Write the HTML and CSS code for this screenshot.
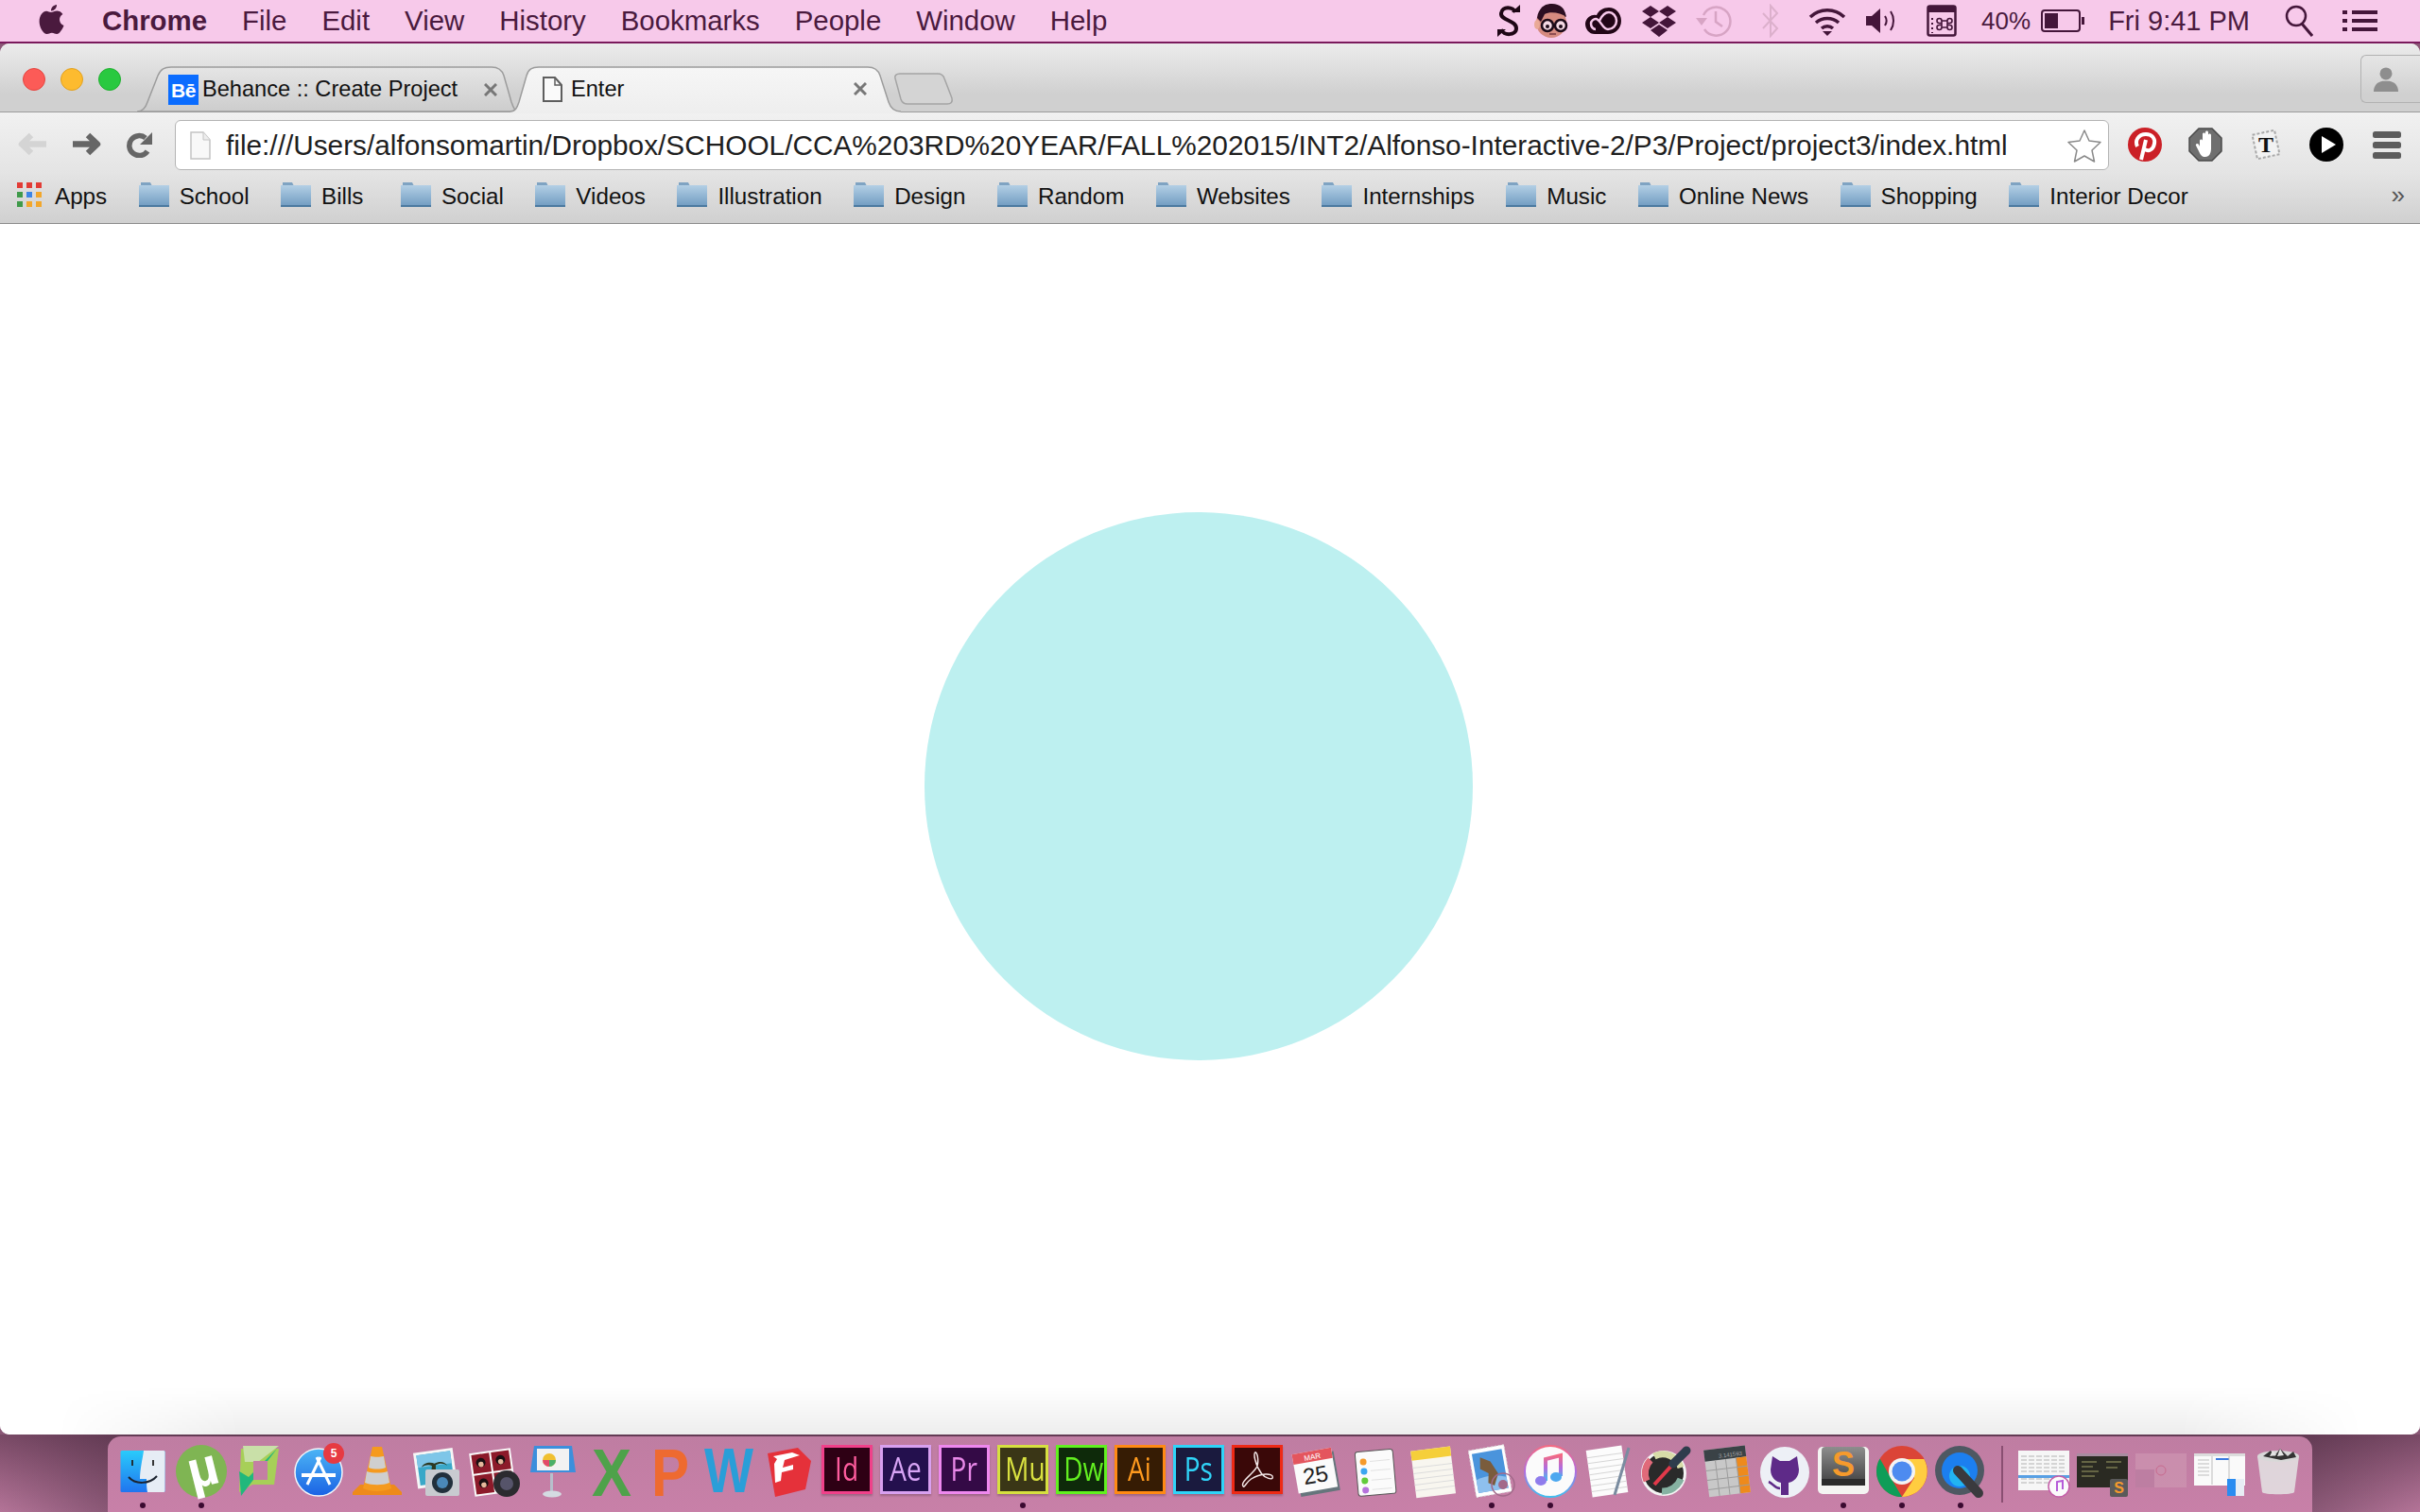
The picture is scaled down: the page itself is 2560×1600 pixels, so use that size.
FILE: index.html
```html
<!DOCTYPE html>
<html lang="en">
<head>
<meta charset="utf-8">
<title>Enter</title>
<link rel="stylesheet" href="styles.css">
</head>
<body>
<header class="menubar">
  <svg class="apple" width="28" height="34" viewBox="0 0 28 34"><path fill="#4a1a3e" d="M19 1c.3 3-2.500 6.500-6 6.500C12.700 4.300 15.800 1.200 19 1zM13 9c2 0 3.600-1.500 6.300-1.500 2.200 0 4.600 1.200 6.100 3.400-5 3-4.200 9.900 1.100 12-1.300 3.500-4.600 9.100-7.400 9.100-2 0-2.800-1.300-5.200-1.300s-3.200 1.300-5.200 1.300C4.500 32 .6 24.500.6 18.700.6 12 4.700 7.700 8 7.700 10 7.700 11.300 9 13 9z"/></svg>
  <nav class="menus">
    <span class="menu-app">Chrome</span><span>File</span><span>Edit</span><span>View</span><span>History</span><span>Bookmarks</span><span>People</span><span>Window</span><span>Help</span>
  </nav>
  <div class="tray">
    <svg class="t-sync" width="26" height="36" viewBox="0 0 26 36"><g fill="none" stroke="#1e0716" stroke-width="4"><path d="M20 9C18 3 6 2 5 10c-1 8 16 7 16 16 0 8-14 8-16 1"/></g><path fill="#1e0716" d="M16 9h9V1zM10 27H1v8z"/></svg>
    <svg class="t-face" width="40" height="38" viewBox="0 0 40 38"><path fill="#2c0e22" d="M8 12C9 3 16 1 22 1c8 0 14 5 14 13v6H8z"/><ellipse cx="21" cy="21" rx="16" ry="16" fill="#d68b80"/><path fill="#2c0e22" d="M6 16C7 5 15 3 22 3c8 0 14 4 15 12-6-5-18-6-23-3l-4 8z"/><ellipse cx="6" cy="23" rx="3" ry="5" fill="#e9a996"/><circle cx="17" cy="24" r="6" fill="#f4d9e4" stroke="#1c0a18" stroke-width="2.500"/><circle cx="31" cy="24" r="6" fill="#f4d9e4" stroke="#1c0a18" stroke-width="2.500"/><circle cx="17" cy="25" r="2" fill="#1c0a18"/><circle cx="31" cy="25" r="2" fill="#1c0a18"/><path d="M19 33h7" stroke="#8f4e52" stroke-width="2"/></svg>
    <svg class="t-cc" width="40" height="30" viewBox="0 0 40 30"><path fill="#220617" d="M1 18a10 10 0 0 1 12-9C15 4 20 1 26 1c7 0 13 6 13 14 0 8-6 14-14 14H11C5 29 1 24 1 18z"/><path fill="none" stroke="#f7c9ea" stroke-width="2.500" d="M12 24c-3 0-5-3-5-6s3-5 5-5c5 0 7 11 13 11 5 0 9-4 9-9s-4-9-8-9c-6 0-9 7-10 9"/></svg>
    <svg class="t-box" width="36" height="34" viewBox="0 0 36 34"><path fill="#44163a" d="M9 1l9 6-9 6-9-6zM27 1l9 6-9 6-9-6zM9 13l9 6-9 6-9-6zM27 13l9 6-9 6-9-6zM18 21l9 6-9 7-9-7z"/></svg>
    <svg class="t-time" width="38" height="36" viewBox="0 0 38 36"><g fill="none" stroke="#d7a4c4" stroke-width="2.500"><path d="M8 12A15 15 0 1 1 9 27"/><path d="M21 8v11l7 5"/></g><path fill="#d7a4c4" d="M0 15h12l-6 8z"/></svg>
    <svg class="t-bt" width="20" height="36" viewBox="0 0 20 36"><path fill="none" stroke="#dcb0cc" stroke-width="2" d="M2 10l15 16-7 8V2l7 8L2 26"/></svg>
    <svg class="t-wifi" width="40" height="32" viewBox="0 0 40 32"><g fill="none" stroke="#44163a" stroke-width="3.500"><path d="M2 12a26 26 0 0 1 36 0"/><path d="M8 18a18 18 0 0 1 24 0"/><path d="M14 24a9 9 0 0 1 12 0"/></g><path fill="#44163a" d="M20 32l-5-5h10z"/></svg>
    <svg class="t-vol" width="34" height="30" viewBox="0 0 34 30"><path fill="#44163a" d="M0 10h6l9-8v26l-9-8H0z"/><g fill="none" stroke="#44163a" stroke-width="2"><path d="M20 10c2 3 2 7 0 10"/><path d="M26 5c4 6 4 14 0 20"/></g></svg>
    <svg class="t-cmd" width="32" height="34" viewBox="0 0 32 34"><rect x="1.500" y="1.500" width="29" height="31" rx="2" fill="none" stroke="#44163a" stroke-width="2.500"/><path fill="#44163a" d="M2 2h28v6H2z"/><path fill="none" stroke="#44163a" stroke-width="1.600" d="M16 17h6v7h-6zM16 17a2.500 2.500 0 1 0-2.500 2.500H16M22 17a2.500 2.500 0 1 1 2.500 2.500H22M16 24a2.500 2.500 0 1 1-2.500-2.500H16M22 24a2.500 2.500 0 1 0 2.500-2.500H22"/><path stroke="#44163a" stroke-width="2" stroke-dasharray="2 3" d="M6 14v16"/></svg>
    <span class="pct">40%</span>
    <svg class="t-bat" width="46" height="24" viewBox="0 0 46 24"><rect x="1" y="1" width="40" height="22" rx="3" fill="none" stroke="#44163a" stroke-width="2"/><rect x="4" y="4" width="14" height="16" fill="#44163a"/><rect x="43" y="8" width="3" height="8" fill="#44163a"/></svg>
    <span class="clock">Fri 9:41 PM</span>
    <svg class="t-search" width="30" height="34" viewBox="0 0 30 34"><circle cx="12" cy="12" r="10" fill="none" stroke="#44163a" stroke-width="2.500"/><path stroke="#44163a" stroke-width="3" d="M18 20l11 13"/></svg>
    <svg class="t-list" width="37" height="22" viewBox="0 0 37 22"><path fill="#44163a" d="M0 0h5v4H0zM10 0h27v4H10zM0 9h5v4H0zM10 9h27v4H10zM0 18h5v4H0zM10 18h27v4H10z"/></svg>
  </div>
</header>

<main class="window">
  <div class="tabstrip">
    <div class="lights"><i class="light red"></i><i class="light amber"></i><i class="light green"></i></div>
    <div class="tab tab-back">
      <svg class="tab-shape" width="403" height="49" viewBox="0 0 403 49"><defs><linearGradient id="tb" x1="0" y1="0" x2="0" y2="1"><stop offset="0" stop-color="#e5e5e5"/><stop offset="1" stop-color="#cdcdcd"/></linearGradient></defs><path fill="url(#tb)" stroke="#9c9c9c" stroke-width="1.500" d="M0 48C6 48 9 44 11 38L22 10C25 3 29 1 36 1H375C382 1 386 4 388 10L396 38C398 44 400 48 403 48Z"/></svg>
      <span class="be">Bē</span>
      <span class="tab-title">Behance :: Create Project</span>
      <svg class="tab-x" width="14" height="14" viewBox="0 0 14 14"><path stroke="#777" stroke-width="3" d="M1 1l12 12M13 1L1 13"/></svg>
    </div>
    <div class="tab tab-front">
      <svg class="tab-shape" width="413" height="50" viewBox="0 0 413 50"><defs><linearGradient id="ta" x1="0" y1="0" x2="0" y2="1"><stop offset="0" stop-color="#f6f6f6"/><stop offset="1" stop-color="#eeeeee"/></linearGradient></defs><path fill="url(#ta)" d="M0 50V48C5 48 7 44 9 38L17 10C19 3 23 1 30 1H378C385 1 389 4 391 10L400 38C402 44 406 48 413 48V50Z"/><path fill="none" stroke="#9c9c9c" stroke-width="1.500" d="M0 48C5 48 7 44 9 38L17 10C19 3 23 1 30 1H378C385 1 389 4 391 10L400 38C402 44 406 48 413 48"/></svg>
      <svg class="tab-page" width="21" height="27" viewBox="0 0 21 27"><path fill="#fafafa" stroke="#5e5e5e" stroke-width="2" d="M1 1h12l7 8v17H1z"/><path fill="none" stroke="#5e5e5e" stroke-width="1.500" d="M13 1v8h7"/></svg>
      <span class="tab-title">Enter</span>
      <svg class="tab-x" width="14" height="14" viewBox="0 0 14 14"><path stroke="#777" stroke-width="3" d="M1 1l12 12M13 1L1 13"/></svg>
    </div>
    <svg class="newtab" width="65" height="34" viewBox="0 0 65 34"><path fill="#d4d4d4" stroke="#a4a4a4" stroke-width="1.500" d="M8 1H48C52 1 54 3 55 6L63 27C64 31 62 33 58 33H16C12 33 10 31 9 28L3 6C2 3 4 1 8 1Z"/></svg>
    <div class="avatar">
      <svg width="26" height="26" viewBox="0 0 30 30"><circle cx="15" cy="8" r="7.500" fill="#8e8e8e"/><path fill="#8e8e8e" d="M0 30c0-8 5-12 11-13h8c6 1 11 5 11 13z"/></svg>
    </div>
  </div>

  <div class="chrome-body">
    <div class="toolbar">
      <svg class="nav-back" width="32" height="27" viewBox="0 0 32 27"><path fill="none" stroke="#d4d4d4" stroke-width="6.500" stroke-linejoin="round" d="M30 13.500H5M14 4L4 13.500 14 23"/></svg>
      <svg class="nav-fwd" width="32" height="27" viewBox="0 0 32 27"><path fill="none" stroke="#666" stroke-width="6.500" stroke-linejoin="round" d="M2 13.500h25M18 4l10 9.500L18 23"/></svg>
      <svg class="nav-reload" width="28" height="28" viewBox="0 0 28 28"><path fill="none" stroke="#666" stroke-width="5.500" d="M22 21A10.500 10.500 0 1 1 20 7"/><path fill="#666" d="M27 1v13H14z"/></svg>
      <div class="omnibox">
        <svg class="url-page" width="22" height="30" viewBox="0 0 22 30"><path fill="#f8f8f8" stroke="#c4c4c4" stroke-width="1.500" d="M1 1h13l7 8v20H1z"/><path fill="#ededed" stroke="#c4c4c4" d="M14 1v8h7"/></svg>
        <span class="url">file:///Users/alfonsomartin/Dropbox/SCHOOL/CCA%203RD%20YEAR/FALL%202015/INT2/Alfonso-Interactive-2/P3/Project/project3/index.html</span>
        <svg class="star" width="36" height="36" viewBox="0 0 36 36"><path fill="#fff" stroke="#8a8a8a" stroke-width="1.500" stroke-linejoin="round" d="M18 2l5 11 12 1.500-9 8.500 2.500 12L18 29 7.500 35 10 23 1 14.500 13 13z"/></svg>
      </div>
      <div class="exts">
        <svg width="36" height="36" viewBox="0 0 36 36"><circle cx="18" cy="18" r="18" fill="#cb2027"/><path fill="none" stroke="#fff" stroke-width="4" d="M10 20c-3-6 1-13 9-13 7 0 10 5 9 10-1 6-6 9-10 6M19 13l-5 21"/></svg>
        <svg width="36" height="36" viewBox="0 0 36 36"><path fill="#6f6f6f" stroke="#4a4a4a" stroke-width="1.500" d="M11 1h14l10 10v14L25 35H11L1 25V11z"/><path fill="#fff" d="M12 14c0-2 3-2 3 0V7c0-2 3-2 3 0V5c0-2 3-2 3 0v3c0-2 3-2 3 0v14c0 5-2 9-6 9s-5-2-7-6l-3-6c-1-2 2-3 3-1l1 2z"/></svg>
        <svg width="36" height="36" viewBox="0 0 36 36"><g transform="rotate(-12 18 18)"><path fill="#f2f2f2" stroke="#a8a8a8" stroke-width="2" stroke-dasharray="3 2" d="M6 5h24v26H6z"/></g><text x="18" y="26" text-anchor="middle" class="ext-t">T</text></svg>
        <svg width="36" height="36" viewBox="0 0 36 36"><circle cx="18" cy="18" r="18" fill="#000"/><path fill="#fff" d="M13 9l15 9-15 9z"/></svg>
        <svg width="36" height="36" viewBox="0 0 36 36"><g fill="#5c5c5c"><rect x="3" y="4" width="30" height="7" rx="2.500"/><rect x="3" y="15" width="30" height="7" rx="2.500"/><rect x="3" y="26" width="30" height="7" rx="2.500"/></g></svg>
      </div>
    </div>
    <div class="bookmarks">
      <div class="bm bm-apps"><svg width="26" height="26" viewBox="0 0 26 26"><path fill="#e23c36" d="M0 0h6v6H0zM10 0h6v6h-6zM20 0h6v6h-6z"/><path fill="#3f9a4a" d="M0 10h6v6H0z"/><path fill="#3c85e6" d="M10 10h6v6h-6z"/><path fill="#f2a72c" d="M20 10h6v6h-6zM10 20h6v6h-6zM20 20h6v6h-6z"/><path fill="#3f9a4a" d="M0 20h6v6H0z"/></svg><span>Apps</span></div>
      <div class="bm"><svg class="folder" viewBox="0 0 32 26"><use href="#fld"/></svg><span>School</span></div>
      <div class="bm bm-bills"><svg class="folder" viewBox="0 0 32 26"><use href="#fld"/></svg><span>Bills</span></div>
      <div class="bm"><svg class="folder" viewBox="0 0 32 26"><use href="#fld"/></svg><span>Social</span></div>
      <div class="bm"><svg class="folder" viewBox="0 0 32 26"><use href="#fld"/></svg><span>Videos</span></div>
      <div class="bm"><svg class="folder" viewBox="0 0 32 26"><use href="#fld"/></svg><span>Illustration</span></div>
      <div class="bm"><svg class="folder" viewBox="0 0 32 26"><use href="#fld"/></svg><span>Design</span></div>
      <div class="bm"><svg class="folder" viewBox="0 0 32 26"><use href="#fld"/></svg><span>Random</span></div>
      <div class="bm"><svg class="folder" viewBox="0 0 32 26"><use href="#fld"/></svg><span>Websites</span></div>
      <div class="bm"><svg class="folder" viewBox="0 0 32 26"><use href="#fld"/></svg><span>Internships</span></div>
      <div class="bm"><svg class="folder" viewBox="0 0 32 26"><use href="#fld"/></svg><span>Music</span></div>
      <div class="bm"><svg class="folder" viewBox="0 0 32 26"><use href="#fld"/></svg><span>Online News</span></div>
      <div class="bm"><svg class="folder" viewBox="0 0 32 26"><use href="#fld"/></svg><span>Shopping</span></div>
      <div class="bm"><svg class="folder" viewBox="0 0 32 26"><use href="#fld"/></svg><span>Interior Decor</span></div>
      <span class="more">»</span>
    </div>
  </div>

  <section class="page">
    <div class="circle"></div>
    <div class="shade"></div>
  </section>
</main>

<footer class="desk">
  <div class="dock">
    <div class="slot"><svg viewBox="0 0 56 56"><defs><linearGradient id="fb" x1="0" y1="0" x2="0" y2="1"><stop offset="0" stop-color="#2acbfb"/><stop offset="1" stop-color="#2075ef"/></linearGradient></defs><rect x="4.500" y="6" width="47" height="44" rx="1.500" fill="url(#fb)"/><path fill="#e6edf5" d="M29 6h21a1.500 1.500 0 0 1 1.500 1.500v41A1.500 1.500 0 0 1 50 50H33c-1-5-1-11-1-14h-7c0-10 3-22 4-30z"/><path d="M17 16v6M39 16v6" stroke="#222" stroke-width="1.800"/><path d="M13 34c7 8 22 8 30-1" fill="none" stroke="#1c2430" stroke-width="2"/></svg><i class="dot"></i></div>
    <div class="slot"><svg viewBox="0 0 56 56"><ellipse cx="28" cy="28" rx="27" ry="28" fill="#7fb553"/><text x="30" y="44" text-anchor="middle" class="ico-mu" transform="rotate(-14 28 28)">µ</text></svg><i class="dot"></i></div>
    <div class="slot"><svg viewBox="0 0 56 56"><path fill="#a7cf58" d="M8 4h40l-5 38H20L6 50z"/><path fill="#c9e0a8" d="M10 1h38L26 18H12z"/><path fill="#21b87c" d="M46 4L8 54l-2-26 10 6z"/><rect x="21" y="17" width="15" height="20" fill="#c47ea4"/></svg></div>
    <div class="slot slot-badge"><svg viewBox="0 0 56 56"><defs><linearGradient id="as" x1="0" y1="0" x2="0" y2="1"><stop offset="0" stop-color="#4cb5f5"/><stop offset="1" stop-color="#1a62e4"/></linearGradient></defs><circle cx="28" cy="29" r="25" fill="url(#as)" stroke="#f2f6fa" stroke-width="1.500"/><g stroke="#fff" stroke-width="3" fill="none"><path d="M30 13L16 42M26 13l14 29"/><path d="M10 32h36" stroke-width="4"/></g></svg><span class="badge">5</span></div>
    <div class="slot"><svg viewBox="0 0 56 56"><path fill="#ee8a1a" d="M2 50l8-8h36l8 8 0 3H2z"/><path fill="#f59a1e" d="M23 2h10l10 44c-8 4-22 4-30 0z"/><path fill="#cfcfcf" d="M21 12c4 1 10 1 14 0l2 12c-5 2-13 2-18 0zM17 28c6 2 16 2 22 0l2 12c-7 3-19 3-26 0z"/></svg></div>
    <div class="slot"><svg viewBox="0 0 56 56"><g transform="rotate(-8 25 22)"><rect x="6" y="6" width="42" height="38" fill="#f6f6f6"/><rect x="9" y="9" width="36" height="32" fill="#3aa8c8"/><rect x="9" y="9" width="36" height="13" fill="#7ec6e8"/><path fill="#2c3a22" d="M27 20c-5-3-12-2-14 2 4-2 8-2 11 0l-4 14h6l2-14c4-2 9-1 12 2-2-5-8-6-13-4z"/></g><rect x="17" y="26" width="36" height="28" rx="2" fill="#c8cbd0"/><circle cx="35" cy="40" r="11" fill="#22303c"/><circle cx="35" cy="40" r="6" fill="#4a88b8"/></svg></div>
    <div class="slot"><svg viewBox="0 0 56 56"><g transform="rotate(-8 26 28)"><rect x="4" y="6" width="44" height="46" fill="#fafafa"/><g fill="#8c1a2a"><rect x="6" y="8" width="19" height="20"/><rect x="27" y="8" width="19" height="20"/><rect x="6" y="30" width="19" height="20"/><rect x="27" y="30" width="19" height="20"/></g><g fill="#1a1012"><circle cx="15" cy="17" r="5"/><circle cx="36" cy="17" r="5"/><circle cx="15" cy="39" r="5"/></g><g fill="#e6b89c"><circle cx="15" cy="19" r="2.800"/><circle cx="36" cy="19" r="2.800"/><circle cx="15" cy="41" r="2.800"/></g></g><circle cx="41" cy="41" r="14" fill="#2b2b2f"/><circle cx="41" cy="41" r="7" fill="#56546a"/></svg></div>
    <div class="slot"><svg viewBox="0 0 56 56"><path fill="#3c8fdc" d="M8 1h40l4 28H4z"/><rect x="11" y="4" width="34" height="23" fill="#f2f2f2"/><circle cx="24" cy="16" r="7" fill="#f0c030"/><path fill="#4ab06a" d="M24 16v7a7 7 0 0 0 7-7z"/><path fill="#e24a6a" d="M24 16h-7a7 7 0 0 0 7 7z"/><path d="M26.500 30v19" stroke="#b6c0cc" stroke-width="3"/><ellipse cx="27" cy="52" rx="10" ry="3.500" fill="#d4dbe2"/></svg></div>
    <div class="slot"><svg viewBox="0 0 56 56"><text x="28" y="54" text-anchor="middle" textLength="42" lengthAdjust="spacingAndGlyphs" class="ico-x">X</text></svg></div>
    <div class="slot"><svg viewBox="0 0 56 56"><text x="28" y="54" text-anchor="middle" textLength="40" lengthAdjust="spacingAndGlyphs" class="ico-p">P</text></svg></div>
    <div class="slot"><svg viewBox="0 0 56 56"><text x="28" y="50" text-anchor="middle" textLength="52" lengthAdjust="spacingAndGlyphs" class="ico-w">W</text></svg></div>
    <div class="slot"><svg viewBox="0 0 56 56"><path fill="#e5313a" d="M6 9l32-6 14 14-6 30-32 8z"/><path fill="#fff" d="M12 12l20-4 8 3-16 5-2 8 11-3v5l-12 3-1 9-6 2-1-20 3-5z"/></svg></div>
    <div class="tile tile-id"><span><b>Id</b></span></div>
    <div class="tile tile-ae"><span><b>Ae</b></span></div>
    <div class="tile tile-pr"><span><b>Pr</b></span></div>
    <div class="tile tile-mu"><span><b>Mu</b></span><i class="dot"></i></div>
    <div class="tile tile-dw"><span><b>Dw</b></span></div>
    <div class="tile tile-ai"><span><b>Ai</b></span></div>
    <div class="tile tile-ps"><span><b>Ps</b></span></div>
    <div class="tile tile-ac"><svg width="38" height="44" viewBox="0 0 38 44"><path fill="none" stroke="#f2e6e6" stroke-width="1.600" d="M3 42c-5-5 9-13 15-22 3-5 2-16-1-18-3 0-1 14 7 25 4 5 13 8 13 4 0-5-14-5-25 2-6 4-7 9-9 9z"/></svg></div>
    <div class="slot"><svg viewBox="0 0 56 56"><g transform="rotate(-10 28 28)"><rect x="8" y="10" width="42" height="42" fill="#66757c"/><rect x="6" y="6" width="42" height="42" fill="#fbfbfb"/><rect x="6" y="6" width="42" height="11" fill="#e4555d"/><text x="27" y="15" text-anchor="middle" class="cal-m">MAR</text><text x="27" y="40" text-anchor="middle" class="cal-d">25</text></g></svg></div>
    <div class="slot"><svg viewBox="0 0 56 56"><g transform="rotate(-5 28 28)"><rect x="9" y="6" width="40" height="47" rx="3" fill="#fbfbfb" stroke="#555"/><circle cx="17" cy="17" r="3.500" fill="#f59a2c"/><circle cx="17" cy="27" r="3.500" fill="#3ca6f0"/><circle cx="17" cy="37" r="3.500" fill="#62cc3c"/><circle cx="17" cy="47" r="3.500" fill="#b672dc"/><path d="M24 17h21M24 27h21M24 37h21M24 47h21" stroke="#e2e2e2"/></g></svg></div>
    <div class="slot"><svg viewBox="0 0 56 56"><g transform="rotate(-7 28 28)"><rect x="7" y="4" width="42" height="50" fill="#f8f6ef"/><rect x="7" y="4" width="42" height="10" fill="#f5cf3a"/><path d="M7 22h42M7 28h42M7 34h42M7 40h42M7 46h42" stroke="#dcdcdc"/></g></svg></div>
    <div class="slot"><svg viewBox="0 0 56 56"><g transform="rotate(-10 24 26)"><rect x="7" y="3" width="38" height="50" fill="#fff" stroke="#ddd" stroke-dasharray="2 2"/><rect x="10" y="7" width="32" height="42" fill="#4a94dc"/><path fill="#8ec0ee" d="M10 35c10-4 22-2 32 2v12H10z"/><path fill="#7a5c3c" d="M18 12l10 6 6 14-6 12-6-4 2-10-8-6z"/></g><circle cx="40" cy="42" r="12" fill="none" stroke="#a26a8a" stroke-width="1.500"/><circle cx="40" cy="42" r="5" fill="#a26a8a"/></svg><i class="dot"></i></div>
    <div class="slot"><svg viewBox="0 0 56 56"><defs><linearGradient id="it" x1="0" y1="0" x2="0" y2="1"><stop offset="0" stop-color="#f46a82"/><stop offset=".5" stop-color="#b06ce0"/><stop offset="1" stop-color="#3ec0f0"/></linearGradient></defs><circle cx="28" cy="28" r="27" fill="#fbfbfb" stroke="url(#it)" stroke-width="2"/><path fill="none" stroke="url(#it)" stroke-width="4" d="M23 38V15l16-4v22"/><ellipse cx="18" cy="38" rx="6" ry="5" fill="#8f7cec"/><ellipse cx="34" cy="34" rx="6" ry="5" fill="#4ca8f0"/></svg><i class="dot"></i></div>
    <div class="slot"><svg viewBox="0 0 56 56"><g transform="rotate(-8 26 28)"><rect x="7" y="3" width="38" height="50" fill="#fcfcfc"/><path d="M7 11h38M7 17h38M7 23h38M7 29h38M7 35h38M7 41h38M7 47h38" stroke="#d6d6d6"/></g><path d="M49 3L34 53" stroke="#7a8ca0" stroke-width="3"/></svg></div>
    <div class="slot"><svg viewBox="0 0 56 56"><circle cx="24" cy="30" r="24" fill="#f4f4f4"/><circle cx="24" cy="30" r="21" fill="#2a2a2a"/><path fill="none" stroke="#e06a7a" stroke-width="7" d="M6 38A20 20 0 0 1 10 16"/><path fill="none" stroke="#d8dca8" stroke-width="7" d="M14 12A20 20 0 0 1 42 24"/><path fill="none" stroke="#86b2a2" stroke-width="7" d="M42 36A20 20 0 0 1 22 49"/><path stroke="#e2394a" stroke-width="4" d="M14 42l20-22"/><path stroke="#2e3c4c" stroke-width="9" stroke-linecap="round" d="M34 20l14-14"/></svg></div>
    <div class="slot"><svg viewBox="0 0 56 56"><g transform="rotate(-7 28 28)"><rect x="7" y="3" width="44" height="50" fill="#c8c8c8"/><rect x="7" y="3" width="44" height="12" fill="#3a4246"/><text x="47" y="13" text-anchor="end" class="calc-n">3.141593</text><rect x="40" y="15" width="11" height="38" fill="#ee8a1c"/><path d="M7 25h44M7 35h44M7 45h44M18 15v38M29 15v38M40 15v38" stroke="#9c9c9c"/></g></svg></div>
    <div class="slot"><svg viewBox="0 0 56 56"><ellipse cx="28" cy="29" rx="26" ry="27" fill="#edf0f6"/><path fill="#5e2a88" d="M15 12l8 5h10l8-5 2 14c0 9-6 13-11 14v13h-8V40C19 39 13 35 13 26z"/><path fill="none" stroke="#5e2a88" stroke-width="2.500" d="M23 46c-6 0-7-5-12-7"/></svg></div>
    <div class="slot"><svg viewBox="0 0 56 56"><defs><linearGradient id="sb" x1="0" y1="0" x2="0" y2="1"><stop offset="0" stop-color="#8e8e8e"/><stop offset="1" stop-color="#484848"/></linearGradient></defs><rect x="1" y="2" width="54" height="50" rx="5" fill="#f4f4f2"/><path fill="url(#sb)" d="M5 6a4 4 0 0 1 4-4h38a4 4 0 0 1 4 4v32H5z"/><rect x="5" y="36" width="46" height="7" fill="#2b2b2b"/><text x="28" y="33" text-anchor="middle" class="ico-s">S</text></svg><i class="dot"></i></div>
    <div class="slot"><svg viewBox="0 0 56 56"><circle cx="28" cy="28" r="27" fill="#db4437"/><path fill="#0f9d58" d="M28 55A27 27 0 0 1 4.600 14.500L18 38z"/><path fill="#ffcd40" d="M28 15h23.400A27 27 0 0 1 28 55l13-20z"/><circle cx="28" cy="28" r="14" fill="#f4f4f4"/><circle cx="28" cy="28" r="10.500" fill="#4d8bf0"/></svg><i class="dot"></i></div>
    <div class="slot"><svg viewBox="0 0 56 56"><circle cx="27" cy="27" r="26" fill="#4e5862"/><circle cx="27" cy="27" r="19" fill="#1c7ff0"/><circle cx="27" cy="33" r="11" fill="#22b4f2"/><path stroke="#3a3a3e" stroke-width="10" stroke-linecap="round" d="M25 27l22 24"/></svg><i class="dot"></i></div>
    <div class="sep"><i></i></div>
    <div class="slot"><svg viewBox="0 0 56 56"><rect x="1" y="6" width="54" height="42" fill="#f6f6f6"/><path d="M4 12h48M4 16h48M4 20h48M4 24h48M4 28h48M4 36h48M4 40h48" stroke="#b2b2b2" stroke-dasharray="6 2"/><rect x="1" y="32" width="54" height="3" fill="#58a0e4"/><circle cx="44" cy="44" r="11" fill="#fbfbfb" stroke="#c45ea8" stroke-width="1.500"/><path d="M42 49V39l6-1v9" fill="none" stroke="#b65cd8" stroke-width="2"/></svg></div>
    <div class="slot"><svg viewBox="0 0 56 56"><rect x="1" y="9" width="54" height="36" fill="#2a2a22"/><rect x="1" y="9" width="54" height="3" fill="#a88ca0"/><path d="M6 18h16M6 23h12M6 28h18M6 33h14M32 18h16M32 24h12" stroke="#7a7a50" stroke-width="1.500"/><rect x="36" y="36" width="19" height="19" rx="2" fill="#5a5a5a"/><text x="45.500" y="51" text-anchor="middle" class="ico-s2">S</text></svg></div>
    <div class="slot"><svg viewBox="0 0 56 56"><rect x="1" y="9" width="54" height="36" fill="#cc94b0" opacity=".75"/><rect x="1" y="26" width="20" height="19" fill="#bd7ea2"/><circle cx="28" cy="27" r="5" fill="none" stroke="#c86a8e"/></svg></div>
    <div class="slot"><svg viewBox="0 0 56 56"><rect x="1" y="9" width="54" height="34" fill="#fafafa"/><rect x="1" y="9" width="54" height="3" fill="#dcdcdc"/><rect x="24" y="14" width="14" height="2" fill="#3a7ae0"/><path d="M5 16h12M5 20h12M5 24h12M5 28h12M5 32h12M20 12v30M38 12v30" stroke="#bdbdbd"/><rect x="36" y="36" width="18" height="18" fill="#e8eef5"/><path fill="#2a8cf0" d="M36 36h9v18h-9z"/></svg></div>
    <div class="slot"><svg viewBox="0 0 56 56"><path fill="#e4e4e4" opacity=".85" d="M6 12h44l-5 38c-1 3-33 3-34 0z"/><ellipse cx="28" cy="12" rx="22" ry="6" fill="#d8d8d8"/><path fill="#333" d="M12 12l8-6 4 6 6-8 8 8 6-5 3 6-16 3z"/><path fill="#e4e4e4" d="M22 6l4 5-7 1zM30 4l4 7-7 1z"/></svg></div>
  </div>
  <svg class="defs" width="0" height="0"><defs><linearGradient id="fg" x1="0" y1="0" x2="0" y2="1"><stop offset="0" stop-color="#b3cfe5"/><stop offset="1" stop-color="#6e9ac0"/></linearGradient><g id="fld"><path fill="#7fa3c2" d="M2 0h10l2 4H2z"/><rect x="0" y="3" width="32" height="23" fill="url(#fg)"/><rect x="0" y="24" width="32" height="2" fill="#4b7aa0"/></g></defs></svg>
</footer>
</body>
</html>
```

FILE: styles.css
```css
* { box-sizing: border-box; }
html, body { margin: 0; height: 100%; }
body {
  width: 2560px;
  height: 1600px;
  overflow: hidden;
  display: flex;
  flex-direction: column;
  background: #8a5876;
  font-family: "Liberation Sans", Arial, sans-serif;
}

/* menu bar */
.menubar {
  flex: none;
  height: 46px;
  display: flex;
  align-items: center;
  padding: 0 45px 0 41px;
  background: #f7c9ea;
  border-bottom: 2px solid #7a1a5c;
  color: #4a1a3e;
  font-size: 29.4px;
}
.apple { flex: none; margin-top: -2px; }
.menus { display: flex; gap: 37px; margin-left: 39px; }
.menu-app { font-weight: 700; }
.tray { margin-left: auto; display: flex; align-items: center; }
.t-face { margin-left: 11px; }
.t-cc { margin-left: 16px; }
.t-box { margin-left: 21px; }
.t-time { margin-left: 21px; }
.t-bt { margin-left: 31px; }
.t-wifi { margin-left: 30px; }
.t-vol { margin-left: 21px; }
.t-cmd { margin-left: 30px; }
.pct { margin-left: 26px; font-size: 26px; }
.t-bat { margin-left: 11px; }
.clock { margin-left: 25px; font-size: 29px; }
.t-search { margin-left: 37px; }
.t-list { margin-left: 31px; }

/* window */
.window {
  flex: none;
  height: 1472px;
  display: flex;
  flex-direction: column;
  border-radius: 10px;
  overflow: hidden;
  background: #fff;
}
.tabstrip {
  flex: none;
  height: 73px;
  display: flex;
  align-items: flex-end;
  background: linear-gradient(#ececec, #d0d0d0 75%);
  border-bottom: 1.5px solid #9c9c9c;
}
.lights {
  flex: none;
  align-self: flex-start;
  display: flex;
  gap: 16px;
  margin: 26px 17px 0 24px;
}
.light { width: 24px; height: 24px; border-radius: 50%; }
.red { background: #fc5b57; border: 1px solid #e5453f; }
.amber { background: #fdbb2f; border: 1px solid #e2a11f; }
.green { background: #29c940; border: 1px solid #1fb02f; }
.tab {
  position: relative;
  flex: none;
  height: 49px;
  margin-bottom: -1px;
  display: flex;
  align-items: center;
  font-size: 23.6px;
  color: #111;
}
.tab-shape { position: absolute; left: 0; top: 0; }
.tab > :not(.tab-shape) { position: relative; }
.tab-back { width: 403px; padding: 0 22px 0 33px; }
.tab-front { width: 413px; height: 50px; margin-left: -8px; margin-bottom: -2px; padding: 0 36px 2px 34px; z-index: 1; }
.be {
  width: 32px;
  height: 32px;
  margin-right: 4px;
  background: #0a6cff;
  color: #fff;
  font-size: 21px;
  font-weight: 700;
  letter-spacing: -.5px;
  line-height: 34px;
  text-align: center;
}
.tab-page { margin-right: 9px; }
.tab-x { margin-left: auto; flex: none; }
.newtab {
  flex: none;
  margin: 0 0 7px -9px;
}
.avatar {
  flex: none;
  align-self: flex-start;
  width: 63px;
  height: 51px;
  margin: 12px 0 0 auto;
  padding-right: 10px;
  border: 1.5px solid #b2b2b2;
  border-right: 0;
  border-radius: 6px 0 0 6px;
  display: flex;
  align-items: center;
  justify-content: center;
}

.chrome-body {
  flex: none;
  background: linear-gradient(#f1f1f1, #e4e4e4 55%, #d0d0d0);
  border-bottom: 1.5px solid #8c8c8c;
  height: 118px;
}
.toolbar {
  height: 61px;
  display: flex;
  align-items: flex-start;
  padding: 8px 0 0 19px;
}
.nav-back, .nav-fwd, .nav-reload { flex: none; margin-top: 12px; }
.nav-fwd { margin-left: 24px; }
.nav-reload { margin-left: 27px; }
.omnibox {
  flex: none;
  width: 2046px;
  height: 53px;
  margin-left: 23px;
  display: flex;
  align-items: center;
  padding-left: 15px;
  background: #fff;
  border: 1.5px solid #b4b4b4;
  border-radius: 6px;
}
.url-page { flex: none; }
.url { margin: 1px 0 0 16px; font-size: 29.8px; color: #1e1e1e; white-space: nowrap; }
.star { flex: none; margin-left: auto; margin-right: 7px; }
.exts { display: flex; gap: 28px; margin: 8px 0 0 20px; }
.ext-t { font: 700 24px "Liberation Serif", serif; fill: #111; }

.bookmarks {
  height: 56px;
  display: flex;
  align-items: center;
  gap: 33.5px;
  padding: 0 0 4px 18px;
  font-size: 24.2px;
  color: #111;
  white-space: nowrap;
}
.bm { display: flex; align-items: center; gap: 11px; flex: none; }
.bm span { margin-top: 3px; }
.bm-apps { gap: 14px; }
.bm-bills { margin-right: 6px; }
.folder { width: 32px; height: 26px; flex: none; }
.more { margin-left: auto; margin-right: 16px; color: #555; font-size: 26px; }

/* page */
.page {
  position: relative;
  flex: 1;
  padding: 305px 0 0 978px;
  background: #fff;
}
.circle { width: 580px; height: 580px; border-radius: 50%; background: #bdf0f0; }
.shade {
  position: absolute;
  left: 60px;
  right: 60px;
  bottom: 0;
  height: 50px;
  background: linear-gradient(rgba(0,0,0,0), rgba(0,0,0,.07));
  -webkit-mask-image: linear-gradient(90deg, transparent, #000 8%, #000 92%, transparent);
  mask-image: linear-gradient(90deg, transparent, #000 8%, #000 92%, transparent);
}

/* dock */
.desk {
  flex: none;
  height: 82px;
  display: flex;
  justify-content: center;
  padding-top: 2px;
  background:
    linear-gradient(rgba(60,30,50,.5), rgba(60,30,50,0)),
    linear-gradient(90deg, #b47498, #8a5876 114px, #8a5876 2446px, #b47498);
}
.defs { position: absolute; }
.dock {
  flex: none;
  width: 2332px;
  height: 80px;
  padding-left: 6px;
  display: flex;
  border-radius: 14px 14px 0 0;
  background: linear-gradient(#bf7da2, #c880a8);
}
.slot {
  position: relative;
  flex: none;
  width: 62.06px;
  padding-top: 9px;
  display: flex;
  flex-direction: column;
  align-items: center;
}
.slot svg { width: 56px; height: 56px; flex: none; overflow: visible; }
.dot {
  flex: none;
  width: 6px;
  height: 6px;
  margin-top: 5px;
  border-radius: 50%;
  background: #3a0a30;
}
.badge {
  position: absolute;
  top: 7px;
  right: 4px;
  width: 22px;
  height: 22px;
  border-radius: 50%;
  background: #e63a42;
  color: #fff;
  font-size: 12px;
  font-weight: 700;
  line-height: 22px;
  text-align: center;
}
.ico-mu { font: 700 56px "Liberation Sans", sans-serif; fill: #fff; }
.ico-x { font: 700 70px "Liberation Sans", sans-serif; fill: #4ea24a; }
.ico-p { font: 700 70px "Liberation Sans", sans-serif; fill: #ee6a30; }
.ico-w { font: 700 66px "Liberation Sans", sans-serif; fill: #2a9ed8; }
.ico-s { font: 700 36px "Liberation Sans", sans-serif; fill: #f59a2c; }
.ico-s2 { font: 700 16px "Liberation Sans", sans-serif; fill: #f59a2c; }
.cal-m { font: 8px "Liberation Sans", sans-serif; fill: #fff; }
.cal-d { font: 24px "Liberation Sans", sans-serif; fill: #222; }
.calc-n { font: 6px "Liberation Sans", sans-serif; fill: #aaa; }

.tile {
  position: relative;
  flex: none;
  width: 62.06px;
  height: 62px;
  padding: 9px 4px 0;
}
.tile span, .tile svg { display: block; }
.tile span {
  height: 52px;
  border: 3px solid;
  box-shadow: 0 2px 2px rgba(0,0,0,.2);
  font-family: "Open Sans", sans-serif;
  font-size: 35px;
  line-height: 44px;
  text-align: center;
}
.tile b { display: inline-block; font-weight: 400; transform: scaleX(.8); }
.tile .dot { position: absolute; left: 28px; top: 70px; margin: 0; }
.tile-id span { border-color: #f0418a; background: #2e0014; color: #ff5c9e; }
.tile-ae span { border-color: #d8a0f0; background: #24104e; color: #d8a4f5; }
.tile-pr span { border-color: #ee88ee; background: #340a46; color: #e888e8; }
.tile-mu span { border-color: #d6e040; background: #3a3616; color: #d8e040; }
.tile-dw span { border-color: #62f020; background: #0e2a0a; color: #62ee20; }
.tile-ai span { border-color: #ff8a14; background: #361c04; color: #ff9a1e; }
.tile-ps span { border-color: #30d4f8; background: #1a1a3e; color: #30d4f8; }
.tile-ac svg {
  width: 54px;
  height: 52px;
  padding: 3px 5px;
  border: 3px solid #ee2a16;
  background: #3a0808;
  box-shadow: 0 2px 2px rgba(0,0,0,.2);
}
.sep { flex: none; width: 25px; padding-top: 10px; display: flex; justify-content: center; }
.sep i { width: 2px; height: 60px; background: #8a4f72; }
```
